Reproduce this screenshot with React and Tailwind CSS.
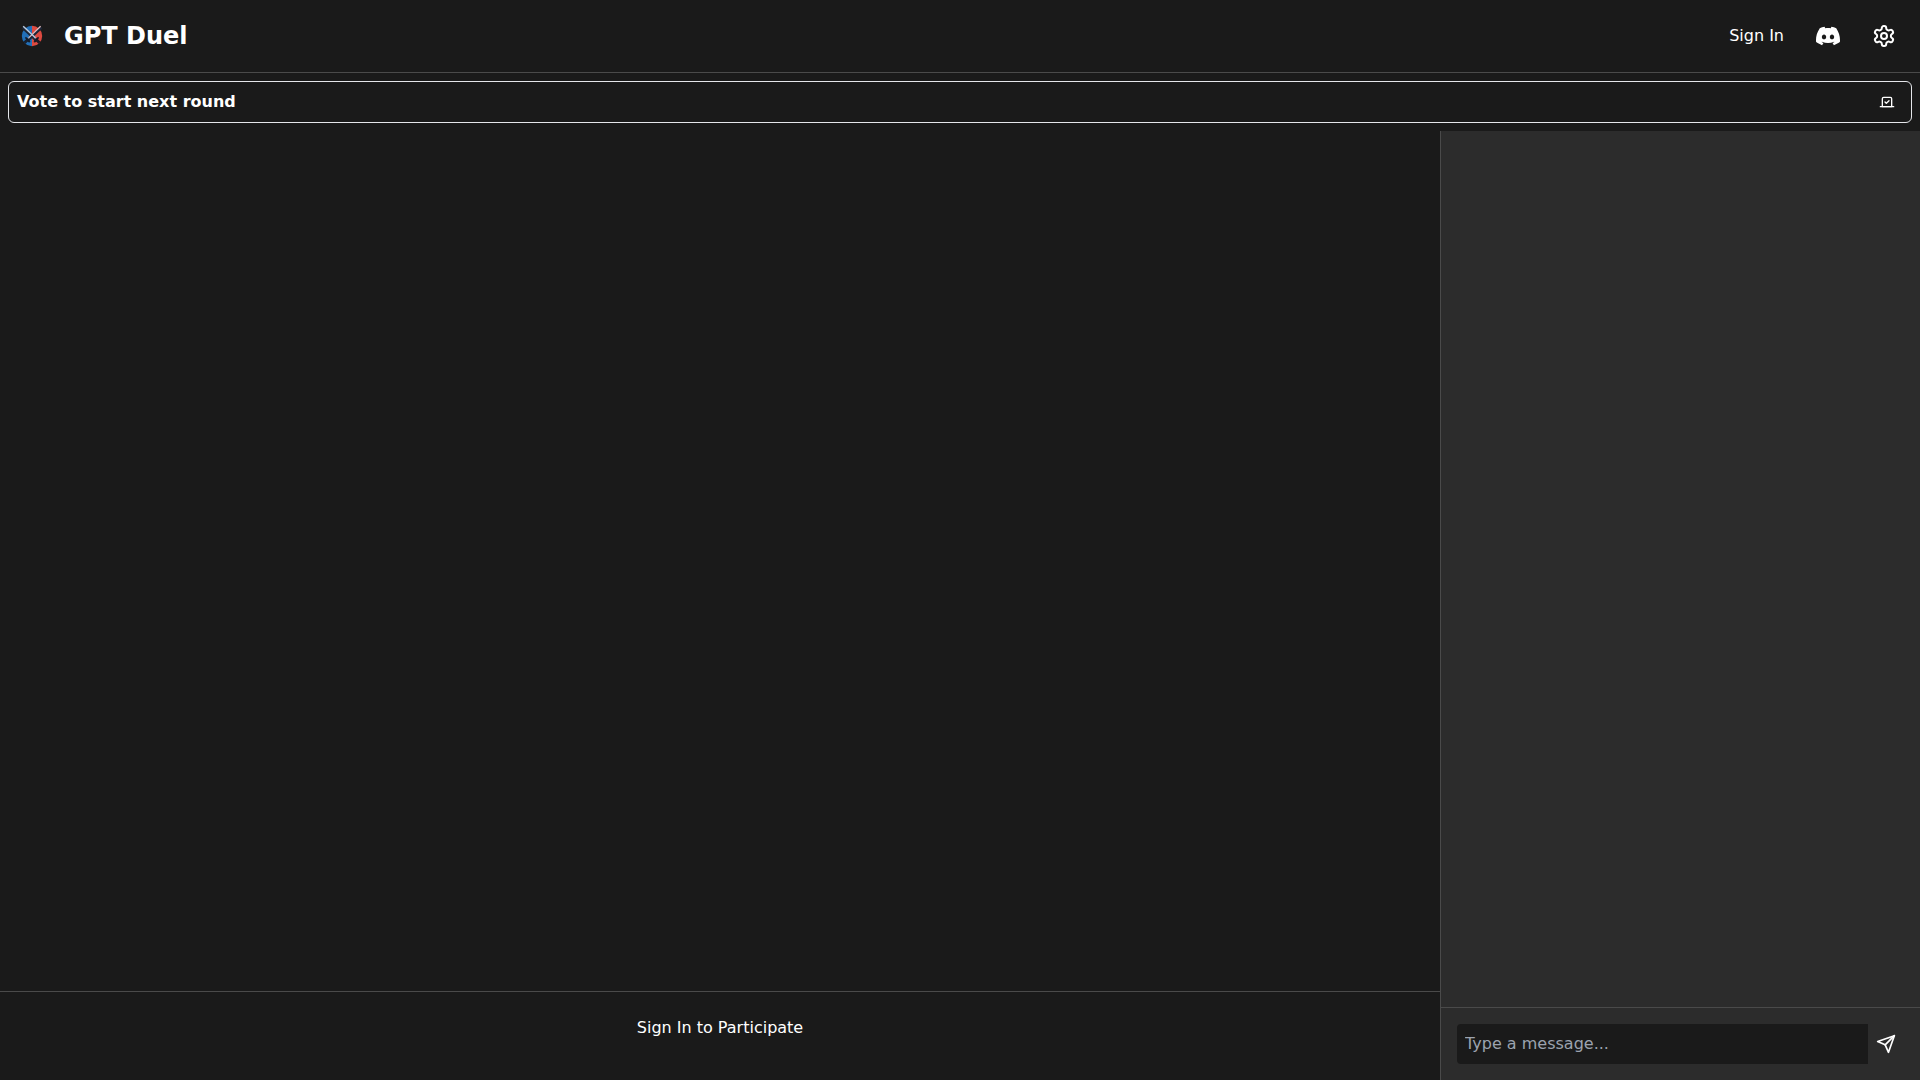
import React, { useState } from "react";
import { SiDiscord } from "react-icons/si";

const Logo = () => (
  <svg width="24" height="24" viewBox="0 0 24 24" fill="none">
    <path d="M12 1.8a10.2 10.2 0 0 0 0 20.4z" fill="#2270b8" />
    <path d="M12 1.8a10.2 10.2 0 0 1 0 20.4z" fill="#dd4a40" />
    {/* sword grips and guards */}
    <path d="M3.4 17.8l3.4-3.4 3.8 3.6-1.6.6-1.4-.8-2.2 2.2z" fill="#17202f" />
    <path d="M20.6 17.8l-3.4-3.4-3.8 3.6 1.6.6 1.4-.8 2.2 2.2z" fill="#221b24" />
    {/* crossed swords */}
    <path d="M2.6 3.4L16 16M21.4 3.4L8 16" stroke="#1d2636" strokeWidth="3" />
    <path d="M20.6 2.2L9.2 13.4" stroke="#e3bcc2" strokeWidth="1.3" />
    <path d="M3.2 2.2L15.4 13.8" stroke="#b9cce2" strokeWidth="1.5" />
    <path d="M9.4 13.2l-1 1.2M14.6 13.2l1 1.2" stroke="#b9c4d6" strokeWidth="1.2" />
    <path d="M5.4 13.4l4.4 4.2M18.6 13.4l-4.4 4.2" stroke="#151b28" strokeWidth="1.6" />
  </svg>
);

const Icon = ({ size, children }) => (
  <svg
    width={size}
    height={size}
    viewBox="0 0 24 24"
    fill="none"
    stroke="currentColor"
    strokeWidth="2"
    strokeLinecap="round"
    strokeLinejoin="round"
  >
    {children}
  </svg>
);

const Header = () => (
  <header className="flex h-[73px] items-center justify-between border-b border-[#4a4a4a] px-5">
    <div className="flex items-center gap-5">
      <Logo />
      <h1 className="text-2xl font-bold">GPT Duel</h1>
    </div>
    <div className="flex items-center gap-8 pr-1">
      <button>Sign In</button>
      <a href="#discord" aria-label="Discord">
        <SiDiscord size={24} />
      </a>
      <button aria-label="Settings">
        <Icon size={24}>
          <path d="M12.22 2h-.44a2 2 0 0 0-2 2v.18a2 2 0 0 1-1 1.73l-.43.25a2 2 0 0 1-2 0l-.15-.08a2 2 0 0 0-2.73.73l-.22.38a2 2 0 0 0 .73 2.73l.15.1a2 2 0 0 1 1 1.72v.51a2 2 0 0 1-1 1.74l-.15.09a2 2 0 0 0-.73 2.73l.22.38a2 2 0 0 0 2.73.73l.15-.08a2 2 0 0 1 2 0l.43.25a2 2 0 0 1 1 1.73V20a2 2 0 0 0 2 2h.44a2 2 0 0 0 2-2v-.18a2 2 0 0 1 1-1.73l.43-.25a2 2 0 0 1 2 0l.15.08a2 2 0 0 0 2.73-.73l.22-.39a2 2 0 0 0-.73-2.73l-.15-.08a2 2 0 0 1-1-1.74v-.5a2 2 0 0 1 1-1.74l.15-.09a2 2 0 0 0 .73-2.73l-.22-.38a2 2 0 0 0-2.73-.73l-.15.08a2 2 0 0 1-2 0l-.43-.25a2 2 0 0 1-1-1.73V4a2 2 0 0 0-2-2z" />
          <circle cx="12" cy="12" r="3" />
        </Icon>
      </button>
    </div>
  </header>
);

const VoteBar = () => (
  <div className="m-2 flex items-center justify-between rounded-md border border-[#e5e7eb] p-2">
    <p className="font-bold">Vote to start next round</p>
    <button aria-label="Vote" className="px-2">
      <Icon size={16}>
        <path d="m9 12 2 2 4-4" />
        <path d="M5 7c0-1.1.9-2 2-2h10a2 2 0 0 1 2 2v12H5V7Z" />
        <path d="M22 19H2" />
      </Icon>
    </button>
  </div>
);

const Chat = () => {
  const [message, setMessage] = useState("");

  const handleSubmit = (e) => {
    e.preventDefault();
    setMessage("");
  };

  return (
    <aside className="flex w-1/4 flex-col border-l border-[#4a4a4a] bg-[#2c2c2c]">
      <div className="flex-1 overflow-y-auto"></div>
      <form
        onSubmit={handleSubmit}
        className="flex items-center border-t border-[#4a4a4a] p-4"
      >
        <input
          type="text"
          aria-label="Message"
          value={message}
          onChange={(e) => setMessage(e.target.value)}
          placeholder="Type a message..."
          className="min-w-0 flex-1 rounded-l bg-[#1a1a1a] p-2 outline-none placeholder:text-[#9ca3af]"
        />
        <button type="submit" aria-label="Send" className="p-2">
          <Icon size={20}>
            <path d="m22 2-7 20-4-9-9-4Z" />
            <path d="M22 2 11 13" />
          </Icon>
        </button>
      </form>
    </aside>
  );
};

const App = () => {
  return (
    <div className="flex h-screen flex-col bg-[#1a1a1a] font-['DejaVu_Sans',sans-serif] text-base text-white">
      <Header />
      <VoteBar />
      <div className="flex min-h-0 flex-1">
        <main className="flex flex-1 flex-col">
          <div className="flex-1 overflow-y-auto"></div>
          <div className="flex justify-center border-t border-[#4a4a4a] px-4 pt-6 pb-10">
            <button>Sign In to Participate</button>
          </div>
        </main>
        <Chat />
      </div>
    </div>
  );
};

export default App;
